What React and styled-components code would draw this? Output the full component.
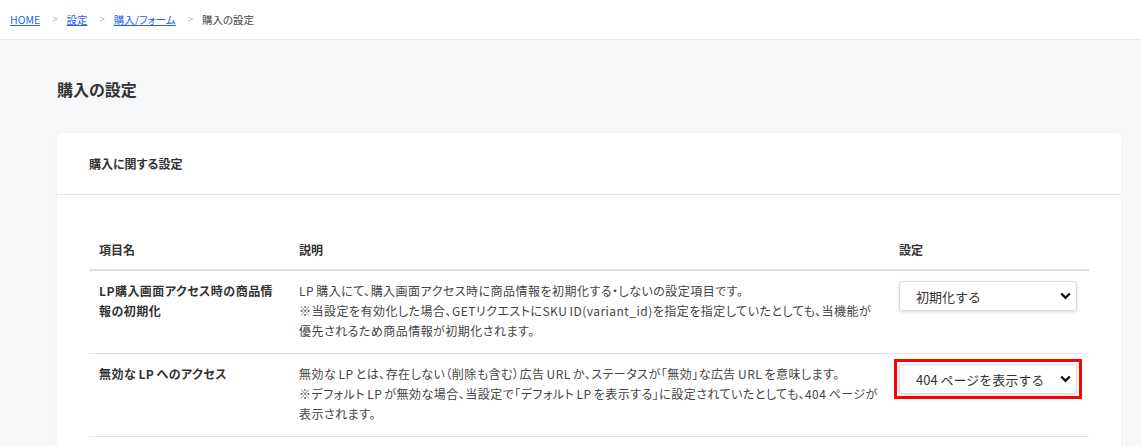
import styled, { createGlobalStyle } from "styled-components";

const GlobalStyle = createGlobalStyle`
  * { box-sizing: border-box; }
  body {
    margin: 0;
    background: #f6f7f9;
    font-family: "Noto Sans CJK JP", "Noto Sans", sans-serif;
    font-feature-settings: "palt";
    color: #333;
  }
`;

// 設定項目
const settings = [
  {
    name: "LP購入画面アクセス時の商品情報の初期化",
    desc: [
      "LP 購入にて、購入画面アクセス時に商品情報を初期化する・しないの設定項目です。",
      "※当設定を有効化した場合、GETリクエストにSKU ID(variant_id)を指定を指定していたとしても、当機能が優先されるため商品情報が初期化されます。",
    ],
    value: "初期化する",
    options: ["初期化する", "初期化しない"],
  },
  {
    name: "無効な LP へのアクセス",
    desc: [
      "無効な LP とは、存在しない（削除も含む）広告 URL か、ステータスが「無効」な広告 URL を意味します。",
      "※デフォルト LP が無効な場合、当設定で「デフォルト LP を表示する」に設定されていたとしても、404 ページが表示されます。",
    ],
    value: "404 ページを表示する",
    options: ["404 ページを表示する", "デフォルト LP を表示する"],
    highlight: true,
  },
];

function App() {
  return (
    <>
      <GlobalStyle />
      <Header>
        <Crumb href="#">HOME</Crumb>
        <Sep>&gt;</Sep>
        <Crumb href="#">設定</Crumb>
        <Sep>&gt;</Sep>
        <Crumb href="#">購入/フォーム</Crumb>
        <Sep>&gt;</Sep>
        <Current>購入の設定</Current>
      </Header>
      <Main>
        <Title>購入の設定</Title>
        <Card>
          <CardHeader>購入に関する設定</CardHeader>
          <CardBody>
            <Table>
              <colgroup>
                <col style={{ width: 200 }} />
                <col style={{ width: 600 }} />
                <col style={{ width: 200 }} />
              </colgroup>
              <thead>
                <tr>
                  <Th>項目名</Th>
                  <Th>説明</Th>
                  <Th>設定</Th>
                </tr>
              </thead>
              <tbody>
                {settings.map((s) => {
                  const select = (
                    <Select defaultValue={s.value}>
                      {s.options.map((o) => (
                        <option key={o}>{o}</option>
                      ))}
                    </Select>
                  );
                  return (
                    <tr key={s.name}>
                      <NameCell>{s.name}</NameCell>
                      <Td>
                        {s.desc.map((d) => (
                          <div key={d}>{d}</div>
                        ))}
                      </Td>
                      <Td>{s.highlight ? <Highlight>{select}</Highlight> : select}</Td>
                    </tr>
                  );
                })}
              </tbody>
            </Table>
          </CardBody>
        </Card>
      </Main>
    </>
  );
}

const Header = styled.div`
  height: 40px;
  background: #fff;
  border-bottom: 1px solid #e3e5e9;
  display: flex;
  align-items: center;
  padding: 0 10px 1px;
  font-size: 10.5px;
`;

const Crumb = styled.a`
  color: #1f5ff0;
  text-decoration: underline;
`;

const Sep = styled.span`
  color: #b5b8bd;
  padding: 0 9px 0 12px;
  font-family: "Liberation Sans", sans-serif;
  font-size: 9px;
`;

const Current = styled.span`
  color: #444;
`;

const Main = styled.div`
  padding: 39px 20px 40px 57px;
`;

const Title = styled.h1`
  margin: 0 0 34px;
  font-size: 16px;
  line-height: 20px;
  font-weight: 700;
  color: #333;
`;

const Card = styled.div`
  width: 1064px;
  background: #fff;
  border-radius: 6px;
  box-shadow: 0 1px 3px rgba(0, 0, 0, 0.04);
`;

const CardHeader = styled.div`
  padding: 21px 32px 20px;
  font-size: 12px;
  line-height: 20px;
  font-weight: 700;
  border-bottom: 1px solid #e2e3e5;
`;

const CardBody = styled.div`
  padding: 32px;
`;

const Table = styled.table`
  width: 1000px;
  border-collapse: collapse;
  table-layout: fixed;
  font-size: 12px;
`;

const Th = styled.th`
  text-align: left;
  font-weight: 700;
  padding: 13px 10px 9px;
  line-height: 20px;
  border-bottom: 2px solid #dedede;
`;

const Td = styled.td`
  vertical-align: top;
  padding: 10px 10px 12px;
  line-height: 20px;
  letter-spacing: 0.04em;
  word-spacing: -1px;
  color: #444;
  border-bottom: 1px solid #e3e3e3;
`;

const NameCell = styled(Td)`
  font-weight: 700;
  color: #333;
`;

// 赤枠の注釈
const Highlight = styled.div`
  margin: -5px;
  padding: 2px;
  width: 188px;
  border: 3px solid #f00;
`;

const Select = styled.select`
  display: block;
  width: 178px;
  height: 30px;
  padding: 0 24px 0 16px;
  font-family: inherit;
  font-size: 13px;
  color: #333;
  background: #fff url("data:image/svg+xml,%3Csvg xmlns='http://www.w3.org/2000/svg' width='11' height='8' viewBox='0 0 11 8'%3E%3Cpath d='M1.2 1.5l4.3 4.3 4.3-4.3' fill='none' stroke='%23111' stroke-width='2.4'/%3E%3C/svg%3E") no-repeat right 5px center;
  appearance: none;
  border: 1px solid #dcdde3;
  border-radius: 3px;
  box-shadow: 0 1px 3px rgba(40, 40, 80, 0.18);
`;

export default App;
